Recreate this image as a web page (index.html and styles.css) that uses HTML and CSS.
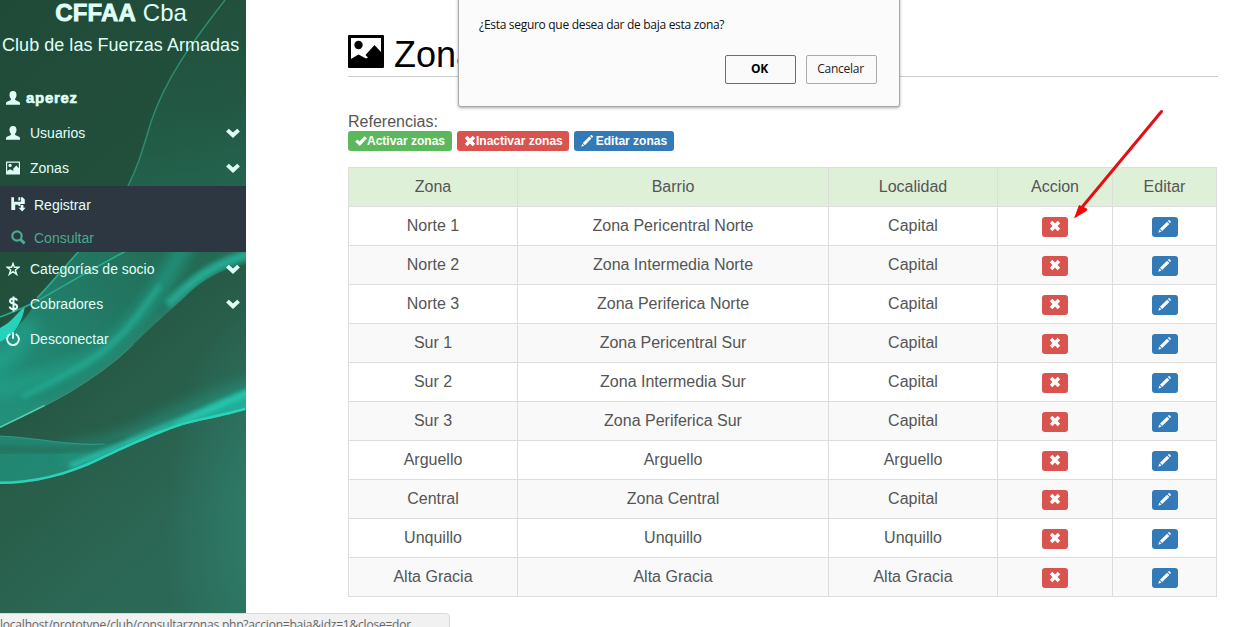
FILE: index.html
```html
<!DOCTYPE html>
<html lang="es">
<head>
<meta charset="utf-8">
<title>CFFAA Cba - Zonas</title>
<link rel="stylesheet" href="styles.css">
</head>
<body>
<svg width="0" height="0" class="defs">
  <symbol id="user" viewBox="0 0 14 14"><path d="M7 0C4.500 0 3.500 1.600 3.500 3.700c0 1.700.6 3 1.400 3.900.2.600.1 1.200-.5 1.600L1 10.800c-.7.400-1 1-1 2v.9h14v-.9c0-1-.3-1.600-1-2L9.600 9.200c-.6-.4-.7-1-.5-1.600.8-.9 1.400-2.200 1.400-3.900C10.500 1.600 9.500 0 7 0z"/></symbol>
  <symbol id="picture" viewBox="0 0 36 33"><path fill-rule="evenodd" d="M1 0h34q1 0 1 1v31q0 1-1 1H1q-1 0-1-1V1q0-1 1-1zM3 3v21L10.500 19.500l7.500 4 2-1-2.500-2.500L26.500 10 33 17V3z"/><circle cx="10.500" cy="10" r="4.200"/></symbol>
  <symbol id="down" viewBox="0 0 14 10"><path d="M2.800.7 7 4.600 11.200.7 13.900 3.400 7 9.900.1 3.400z"/></symbol>
  <symbol id="save" viewBox="0 0 15 15"><path fill-rule="evenodd" d="M.3.300H3v4.400h7V.3h1.600l2.200 2.200V7H9.300v2H7.500V7.700H4.200V13H.3zM7.400.3h1.900v3.300H7.400z"/><path d="M9.800 8h2.600v2.800h2.200L11.100 14.500 7.600 10.800h2.200z"/></symbol>
  <symbol id="search" viewBox="0 0 15 15"><circle cx="6" cy="6" r="4.700" fill="none" stroke="currentColor" stroke-width="2.200"/><path d="M9.400 9.400 13.600 13.400" stroke="currentColor" stroke-width="3"/></symbol>
  <symbol id="star" viewBox="0 0 14 14"><path d="M7 1.400 8.400 5.300H12.900L9.300 8l1.400 4.400L7 9.700l-3.700 2.700L4.700 8 1.100 5.300h4.500z" fill="none" stroke="currentColor" stroke-width="1.400"/></symbol>
  <symbol id="dollar" viewBox="0 0 14 16"><path d="M11 4.700C10.700 3 9.400 2.400 7.500 2.400 5.300 2.400 4 3.300 4 4.900c0 3.800 7.200 1.700 7.200 5.700 0 1.700-1.400 2.600-3.600 2.600S4 12.400 3.600 10.600M7.500.5v15" fill="none" stroke="currentColor" stroke-width="2"/></symbol>
  <symbol id="power" viewBox="0 0 14 14"><path d="M4.300 2A5.900 5.900 0 1 0 9.700 2M7 .3v6.500" fill="none" stroke="currentColor" stroke-width="1.900"/></symbol>
  <symbol id="remove" viewBox="0 0 12 12"><path d="M3.300.8 6 3.500 8.700.8 11.200 3.300 8.500 6l2.700 2.700-2.500 2.500L6 8.500 3.300 11.200.8 8.700 3.500 6 .8 3.300z"/></symbol>
  <symbol id="ok" viewBox="0 0 12 12"><path d="M.2 6.600 2.400 4.500 4.500 6.600 9.500 1.200 12 3.200 4.700 11z"/></symbol>
  <symbol id="pencil" viewBox="0 0 13 13"><path d="M9.800 1 10.600.3q.6-.5 1.200.1l.8.8q.6.600 0 1.200L12 3.200zM9.100 1.700l2.200 2.200-7.100 7.100L2 8.800zM1.400 9.500l2.100 2.100L.3 12.700z"/></symbol>
</svg>

<aside class="sidebar">
  <svg class="waves" width="246" height="614" viewBox="0 0 246 614">
    <defs>
      <linearGradient id="base" x1="0" y1="0" x2=".35" y2="1">
        <stop offset="0" stop-color="#204a38"/><stop offset=".45" stop-color="#22503c"/><stop offset=".75" stop-color="#285e4a"/><stop offset="1" stop-color="#2c6856"/>
      </linearGradient>
      <radialGradient id="side" gradientUnits="userSpaceOnUse" cx="0" cy="0" r="1" gradientTransform="translate(260 530) scale(95 230)"><stop offset="0" stop-color="#2f8270" stop-opacity=".8"/><stop offset="1" stop-color="#2f8270" stop-opacity="0"/></radialGradient>
      <linearGradient id="veil" x1="0" y1="0" x2="0" y2="1"><stop offset="0" stop-color="#27614c" stop-opacity=".1"/><stop offset="1" stop-color="#217a62" stop-opacity=".4"/></linearGradient>
      <linearGradient id="band" gradientUnits="userSpaceOnUse" x1="190" y1="245" x2="20" y2="400"><stop offset="0" stop-color="#246a54"/><stop offset=".5" stop-color="#227a65"/><stop offset="1" stop-color="#228f79"/></linearGradient>
      <linearGradient id="low"><stop offset="0" stop-color="#229480"/><stop offset=".5" stop-color="#25b9a2"/><stop offset="1" stop-color="#23b49c"/></linearGradient>
      <clipPath id="inBand"><path d="M0 245h246v19C215 271 200 283 187 295S150 328 133 345 85 387 33 412L0 428z"/></clipPath>
      <clipPath id="aboveLow"><path d="M0 340h246v70C213 419 195 421 180 426S133 444 100 460 33 484 0 484z"/></clipPath>
      <filter id="b1" x="-20%" y="-20%" width="140%" height="140%"><feGaussianBlur stdDeviation=".6"/></filter>
      <filter id="b3" x="-30%" y="-30%" width="160%" height="160%"><feGaussianBlur stdDeviation="2.600"/></filter>
      <filter id="b7" x="-40%" y="-40%" width="180%" height="180%"><feGaussianBlur stdDeviation="7"/></filter>
    </defs>
    <path fill="url(#base)" d="M0 0h246v614H0z"/>
    <path fill="url(#side)" d="M0 290h246v324H0z"/>
    <path fill="url(#veil)" d="M225 0C190 45 165 80 151 122 143 148 139 164 128 186H246V0z"/>
    <path d="M225 0C190 45 165 80 151 122 143 148 139 164 128 186" fill="none" stroke="#2c8b70" stroke-width="1.500" filter="url(#b1)"/>
    <g clip-path="url(#inBand)">
      <path fill="url(#band)" d="M78 252 37 298C28 320 10 335 0 340v90h250V240H90z"/>
      <path d="M30 320C20 350 0 360-20 380" fill="none" stroke="#24b09a" stroke-width="22" opacity=".45" filter="url(#b7)"/>
      <path d="M188 240C160 290 140 320 112 345S50 375-10 392" fill="none" stroke="#22a68e" stroke-width="14" opacity=".7" filter="url(#b7)"/>
      <path d="M160 285C145 305 133 325 110 345S60 378 22 397" fill="none" stroke="#28b89f" stroke-width="4" opacity=".75" filter="url(#b3)"/>
      <path d="M250 254C210 265 190 283 168 305" fill="none" stroke="#26b59c" stroke-width="10" opacity=".85" filter="url(#b3)"/>
      <path d="M187 295C173 307 150 328 133 345S85 387 33 412" fill="none" stroke="#3b8a74" stroke-width="9" opacity=".4" filter="url(#b3)"/>
      <path d="M133 345C115 363 85 387 33 412L0 428" fill="none" stroke="#3f9c84" stroke-width="1.500" opacity=".6"/>
      <path d="M45 406 0 428" fill="none" stroke="#52d2b6" stroke-width="3" filter="url(#b1)"/>
    </g>
    <path d="M0 328C12 322 18 312 25 306 23 320 15 335 0 342z" fill="#27d3ba" filter="url(#b1)"/>
    <path d="M79 251C62 270 48 287 37 298M126 251C90 270 55 291 37 301 22 309 10 313 0 317" fill="none" stroke="#2aa98e" stroke-width="1.600" filter="url(#b1)"/>
    <g clip-path="url(#aboveLow)">
      <path d="M255 388C215 402 180 415 150 430S100 450 60 455" fill="none" stroke="#22a089" stroke-width="20" opacity=".5" filter="url(#b7)"/>
      <path d="M0 436C40 438 70 446 105 444 130 442 150 432 180 422V490H0z" fill="#229681" opacity=".75" filter="url(#b1)"/>
      <path d="M-10 449C50 452 90 450 125 440" fill="none" stroke="#266d59" stroke-width="8" opacity=".7" filter="url(#b3)"/>
      <path d="M255 386C215 402 195 413 175 422V440L255 416z" fill="#24b8a1" opacity=".85" filter="url(#b3)"/>
      <path d="M250 392C220 404 195 416 172 424S115 450 70 466" fill="none" stroke="#2ad4bc" stroke-width="5" opacity=".8" filter="url(#b3)"/>
      <path d="M246 410C213 419 195 421 180 426S133 444 100 460 33 484 0 484" fill="none" stroke="#2bd2b9" stroke-width="5" filter="url(#b1)"/>
    </g>
    <path d="M0 436C40 438 70 446 105 444" fill="none" stroke="#2b9d85" stroke-width="1" filter="url(#b1)"/>
  </svg>
  <div class="brand"><b>CFFAA</b> Cba</div>
  <div class="club">Club de las Fuerzas Armadas</div>
  <nav class="menu">
    <a class="item account"><svg class="ic"><use href="#user"/></svg><b>aperez</b></a>
    <a class="item"><svg class="ic"><use href="#user"/></svg><span>Usuarios</span><svg class="chev"><use href="#down"/></svg></a>
    <a class="item"><svg class="ic"><use href="#picture"/></svg><span>Zonas</span><svg class="chev"><use href="#down"/></svg></a>
    <div class="sub">
      <a class="subitem"><svg class="sic"><use href="#save"/></svg><span>Registrar</span></a>
      <a class="subitem active"><svg class="sic"><use href="#search"/></svg><span>Consultar</span></a>
    </div>
    <a class="item"><svg class="ic"><use href="#star"/></svg><span>Categorías de socio</span><svg class="chev"><use href="#down"/></svg></a>
    <a class="item"><svg class="ic tall"><use href="#dollar"/></svg><span>Cobradores</span><svg class="chev"><use href="#down"/></svg></a>
    <a class="item"><svg class="ic"><use href="#power"/></svg><span>Desconectar</span></a>
  </nav>
</aside>

<main class="content">
  <h1 class="title"><svg class="title-ic"><use href="#picture"/></svg><span>Zonas</span></h1>
  <div class="refs">Referencias:</div>
  <div class="labels">
    <span class="label green"><svg class="lic"><use href="#ok"/></svg>Activar zonas</span>
    <span class="label red"><svg class="lic"><use href="#remove"/></svg>Inactivar zonas</span>
    <span class="label blue"><svg class="lic pen"><use href="#pencil"/></svg>Editar zonas</span>
  </div>
  <table class="zones">
    <colgroup><col class="c1"><col class="c2"><col class="c3"><col class="c4"><col class="c5"></colgroup>
    <thead><tr><th>Zona</th><th>Barrio</th><th>Localidad</th><th>Accion</th><th>Editar</th></tr></thead>
    <tbody>
      <tr><td>Norte 1</td><td>Zona Pericentral Norte</td><td>Capital</td><td><a class="btn red"><svg><use href="#remove"/></svg></a></td><td><a class="btn blue"><svg><use href="#pencil"/></svg></a></td></tr>
      <tr><td>Norte 2</td><td>Zona Intermedia Norte</td><td>Capital</td><td><a class="btn red"><svg><use href="#remove"/></svg></a></td><td><a class="btn blue"><svg><use href="#pencil"/></svg></a></td></tr>
      <tr><td>Norte 3</td><td>Zona Periferica Norte</td><td>Capital</td><td><a class="btn red"><svg><use href="#remove"/></svg></a></td><td><a class="btn blue"><svg><use href="#pencil"/></svg></a></td></tr>
      <tr><td>Sur 1</td><td>Zona Pericentral Sur</td><td>Capital</td><td><a class="btn red"><svg><use href="#remove"/></svg></a></td><td><a class="btn blue"><svg><use href="#pencil"/></svg></a></td></tr>
      <tr><td>Sur 2</td><td>Zona Intermedia Sur</td><td>Capital</td><td><a class="btn red"><svg><use href="#remove"/></svg></a></td><td><a class="btn blue"><svg><use href="#pencil"/></svg></a></td></tr>
      <tr><td>Sur 3</td><td>Zona Periferica Sur</td><td>Capital</td><td><a class="btn red"><svg><use href="#remove"/></svg></a></td><td><a class="btn blue"><svg><use href="#pencil"/></svg></a></td></tr>
      <tr><td>Arguello</td><td>Arguello</td><td>Arguello</td><td><a class="btn red"><svg><use href="#remove"/></svg></a></td><td><a class="btn blue"><svg><use href="#pencil"/></svg></a></td></tr>
      <tr><td>Central</td><td>Zona Central</td><td>Capital</td><td><a class="btn red"><svg><use href="#remove"/></svg></a></td><td><a class="btn blue"><svg><use href="#pencil"/></svg></a></td></tr>
      <tr><td>Unquillo</td><td>Unquillo</td><td>Unquillo</td><td><a class="btn red"><svg><use href="#remove"/></svg></a></td><td><a class="btn blue"><svg><use href="#pencil"/></svg></a></td></tr>
      <tr><td>Alta Gracia</td><td>Alta Gracia</td><td>Alta Gracia</td><td><a class="btn red"><svg><use href="#remove"/></svg></a></td><td><a class="btn blue"><svg><use href="#pencil"/></svg></a></td></tr>
    </tbody>
  </table>
</main>

<div class="dialog">
  <p class="question">¿Esta seguro que desea dar de baja esta zona?</p>
  <div class="actions"><button class="dbtn ok">OK</button><button class="dbtn">Cancelar</button></div>
</div>

<svg class="arrow" width="94" height="112" viewBox="0 0 94 112"><path d="M88.500 3.500 10 98" stroke="#e30f14" stroke-width="3" stroke-linecap="round"/><path d="M1 110.500 6 97 10 98.500 14.500 101 13.500 103z" fill="#f00a0a"/></svg>

<div class="status">localhost/prototype/club/consultarzonas.php?accion=baja&amp;idz=1&amp;close=dor</div>
</body>
</html>
```
FILE: styles.css
```css
* { box-sizing: border-box; }
body {
  margin: 0;
  width: 1256px;
  height: 627px;
  overflow: hidden;
  position: relative;
  display: flex;
  background: #fff;
  font-family: "Liberation Sans", Arial, sans-serif;
  color: #555;
}
svg { fill: currentColor; display: block; flex: none; }
.defs { position: absolute; }

.sidebar {
  position: relative;
  isolation: isolate;
  width: 246px;
  height: 614px;
  flex: none;
  overflow: hidden;
  color: #e0fff8;
}
.waves { position: absolute; inset: 0; z-index: -1; }
.brand { font-size: 24px; line-height: 26px; text-align: center; padding-right: 4px; }
.brand b { font-weight: 900; -webkit-text-stroke: .8px; letter-spacing: .2px; }
.club { font-size: 18px; line-height: 38px; padding-left: 2px; white-space: nowrap; letter-spacing: .04px; }
.menu { padding-top: 16px; font-size: 14px; }
.item { display: flex; align-items: center; height: 35px; padding: 0 6px; }
.item .ic { width: 14px; height: 14px; margin-right: 10px; }
.item .tall { height: 16px; }
.item.account { font-size: 15px; }
.account b { -webkit-text-stroke: .6px; letter-spacing: .7px; }
.item.account .ic { margin-right: 6px; }
.chev { width: 14px; height: 10px; margin-left: auto; }
.sub { background: #2c3742; height: 66px; margin: 1px 0 -1px; padding-top: 2px; }
.subitem { display: flex; align-items: center; height: 33px; padding-left: 11px; }
.sic { width: 15px; height: 15px; margin-right: 8px; }
.subitem.active { color: #4aaa8c; }

.content { width: 870px; margin-left: 102px; padding-top: 32px; }
.title {
  display: flex;
  align-items: flex-start;
  height: 45px;
  margin: 0;
  border-bottom: 1px solid #ccc;
  font-size: 36px;
  line-height: 46px;
  font-weight: 400;
  color: #000;
}
.title-ic { width: 36px; height: 33px; margin: 3px 10px 0 0; }
.refs { margin-top: 36px; font-size: 16px; line-height: 18px; }
.labels { display: flex; gap: 5px; }
.label {
  display: flex;
  align-items: center;
  height: 20px;
  padding: 0 7px;
  border-radius: 3px;
  font-size: 12px;
  font-weight: 700;
  color: #fff;
  white-space: nowrap;
}
.label.red { padding-right: 6px; }
.lic { width: 12px; height: 12px; }
.lic.pen { margin-right: 3px; }
.green { background: #5cb85c; }
.red { background: #d9534f; }
.blue { background: #337ab7; }

.zones {
  width: 869px;
  margin-top: 16px;
  border-collapse: collapse;
  table-layout: fixed;
  font-size: 16px;
  line-height: 18px;
  text-align: center;
}
.c1 { width: 169px; }
.c2 { width: 311px; }
.c3 { width: 169px; }
.c4 { width: 115px; }
.c5 { width: 104px; }
.zones th, .zones td { height: 39px; padding: 0; border: 1px solid #ddd; font-weight: 400; vertical-align: middle; }
.zones th { background: #dff0d8; }
.zones tbody tr:nth-child(even) { background: #f9f9f9; }
.btn {
  display: flex;
  align-items: center;
  justify-content: center;
  width: 26px;
  height: 20px;
  margin: 2px auto 0;
  border-radius: 3px;
  color: #fff;
}
.btn svg { width: 12px; height: 12px; margin-bottom: 2px; }
.btn.blue svg { width: 13px; height: 13px; }

.dialog {
  position: absolute;
  left: 458px;
  top: -4px;
  width: 442px;
  height: 111px;
  padding: 19px 22px 22px 20px;
  background: #fbfbfb;
  border: 1px solid #aaa;
  border-radius: 3px;
  box-shadow: 0 1px 3px rgba(0, 0, 0, .35);
  font-family: "Open Sans", "Noto Sans", sans-serif;
  font-size: 12px;
  color: #111;
}
.question { margin: 0; line-height: 17px; letter-spacing: -.3px; }
.actions { display: flex; justify-content: flex-end; gap: 10px; margin-top: 22px; }
.dbtn {
  width: 71px;
  height: 29px;
  padding: 0 2px 2px 0;
  background: #fafafa;
  border: 1px solid #aaa;
  border-radius: 2px;
  font: inherit;
  letter-spacing: -.25px;
  color: #222;
}
.dbtn.ok { border-color: #4078ad; font-weight: 700; color: #000; }
.arrow { position: absolute; left: 1073px; top: 108px; }
.status {
  position: absolute;
  left: -1px;
  top: 613px;
  width: 451px;
  height: 22px;
  background: #f1f1f1;
  border: 1px solid #d8d8d8;
  border-radius: 0 4px 0 0;
  font-family: "Open Sans", "Noto Sans", sans-serif;
  font-size: 12px;
  line-height: 22px;
  letter-spacing: -.21px;
  color: #666;
  white-space: nowrap;
}
```
